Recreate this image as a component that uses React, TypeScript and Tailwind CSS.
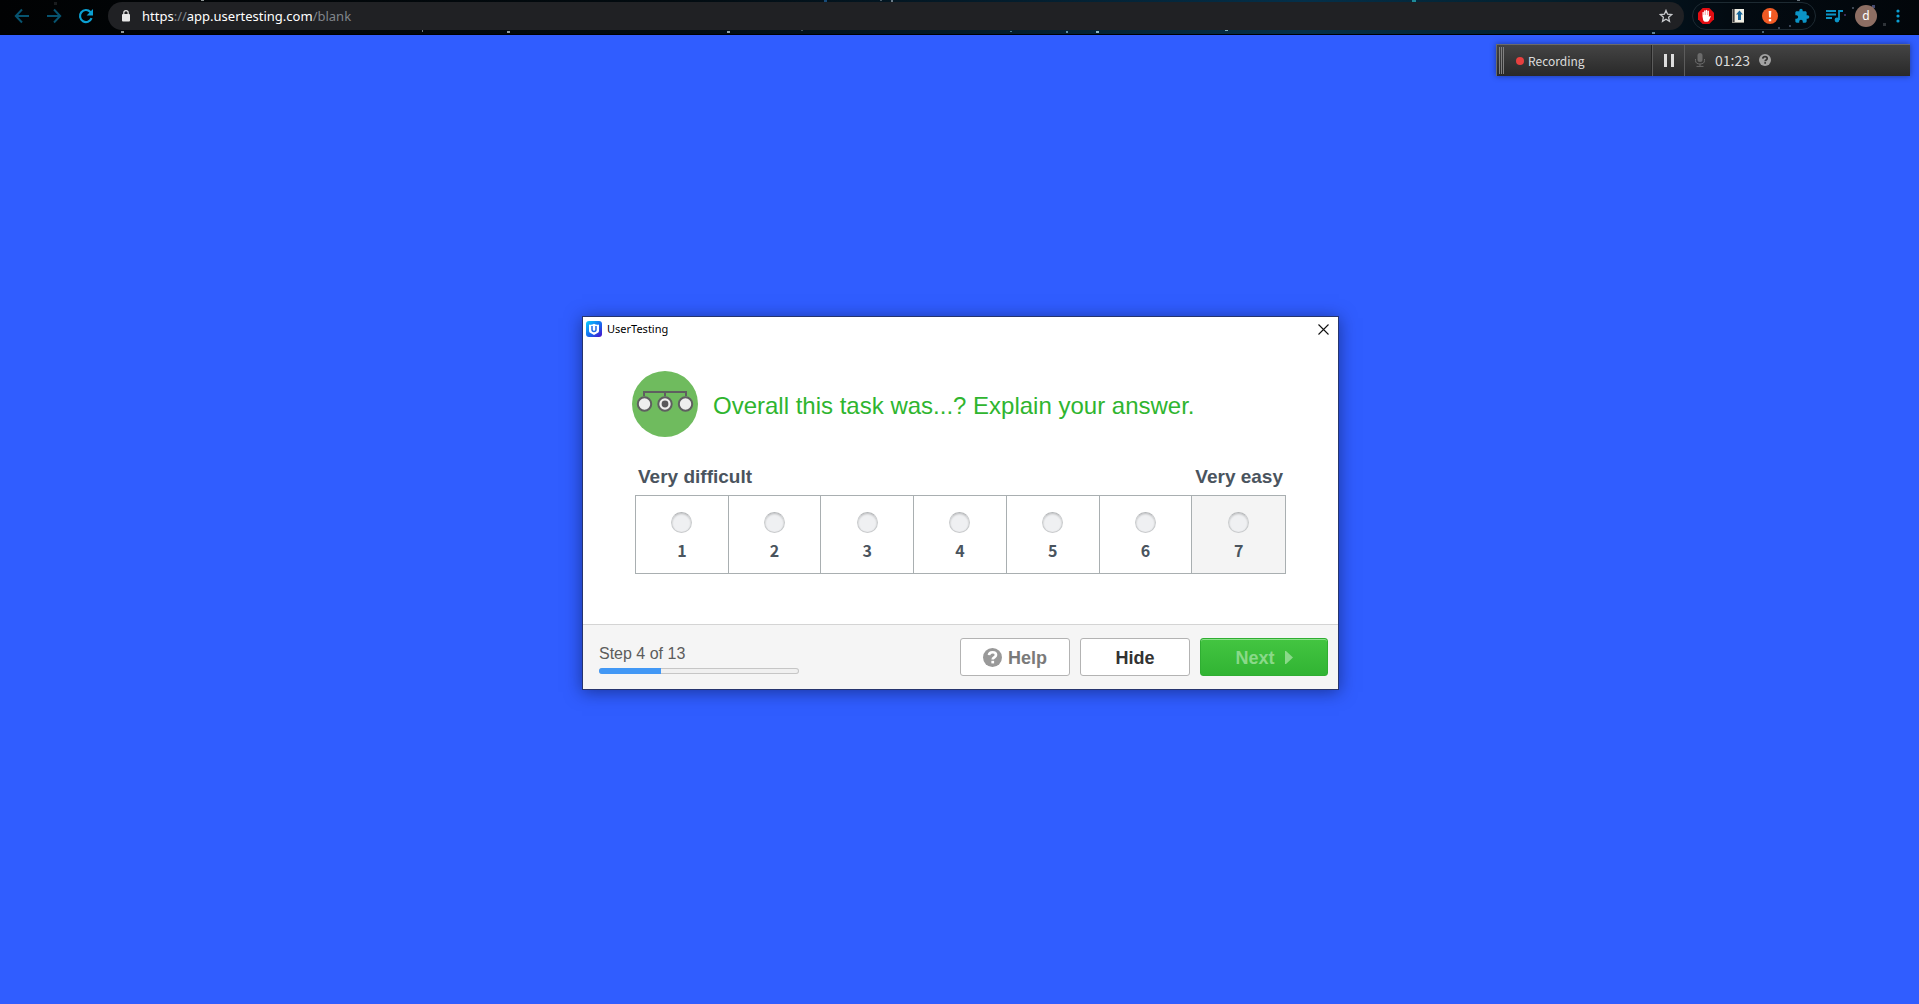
import { useState } from "react";

const STARS: [number, number, number, number, string][] = [
  [121, 31, 3, 2, "#8f9696"],
  [201, 0, 3, 1, "#8f9696"],
  [54, 2, 3, 3, "#1a1c1e"],
  [422, 30, 1, 2, "#6c7780"],
  [507, 31, 3, 2, "#8f9a9c"],
  [727, 31, 3, 2, "#8fa0a4"],
  [824, 0, 3, 2, "#174a78"],
  [880, 0, 2, 1, "#4a5c68"],
  [891, 0, 2, 2, "#6a7c88"],
  [801, 30, 2, 1, "#40505a"],
  [1010, 31, 2, 1, "#467a94"],
  [1066, 31, 2, 2, "#5d8fa6"],
  [1096, 31, 3, 2, "#8db6c4"],
  [1225, 30, 3, 1, "#7fb0b8"],
  [1412, 0, 4, 2, "#1f8a98"],
  [1652, 32, 3, 2, "#5d7f90"],
  [1797, 0, 3, 1, "#6c7880"],
  [1778, 27, 2, 2, "#3b4658"],
  [1789, 25, 2, 2, "#3b4658"],
  [1762, 31, 2, 2, "#4a6274"],
  [1852, 7, 2, 2, "#3b4450"],
  [1872, 5, 3, 3, "#454a70"],
  [1883, 23, 3, 3, "#2e3338"],
  [1844, 14, 2, 2, "#3a2d58"],
];

function BrowserBar() {
  return (
    <header className="relative flex h-[35px] items-start border-b border-black bg-[#02090e] pt-[2px] pr-[13px] pl-2">
      <svg className="pointer-events-none absolute inset-0 h-full w-full" viewBox="0 0 1919 34" preserveAspectRatio="none" aria-hidden="true">
        <defs>
          <linearGradient id="sky" x1="0" x2="1">
            <stop offset="0" stopColor="#010203" />
            <stop offset="0.35" stopColor="#020b10" />
            <stop offset="0.5" stopColor="#031a28" />
            <stop offset="0.68" stopColor="#04304a" />
            <stop offset="0.8" stopColor="#03202e" />
            <stop offset="0.9" stopColor="#030b12" />
            <stop offset="1" stopColor="#02060a" />
          </linearGradient>
        </defs>
        <rect width="1919" height="34" fill="url(#sky)" />
        {STARS.map(([x, y, w, h, c]) => (
          <rect key={`${x}-${y}`} x={x} y={y} width={w} height={h} fill={c} />
        ))}
      </svg>
      <nav className="relative flex h-7 w-[100px] shrink-0 items-center gap-1" aria-label="Navigation">
        <button type="button" aria-label="Back" className="flex h-7 w-7 items-center justify-center text-[#07536f]">
          <svg width="16" height="16" viewBox="0 0 16 16" fill="none" stroke="currentColor" strokeWidth="2">
            <path d="M15 8H2.5M8 1.5 1.8 8 8 14.5" />
          </svg>
        </button>
        <button type="button" aria-label="Forward" className="flex h-7 w-7 items-center justify-center text-[#07536f]">
          <svg width="16" height="16" viewBox="0 0 16 16" fill="none" stroke="currentColor" strokeWidth="2">
            <path d="M1 8h12.5M8 1.5 14.2 8 8 14.5" />
          </svg>
        </button>
        <button type="button" aria-label="Reload" className="flex h-7 w-7 items-center justify-center text-[#0ba0d2]">
          <svg width="16" height="16" viewBox="0 0 16 16" fill="none">
            <path d="M13.6 10.2A6 6 0 1 1 12.4 3.9L13.4 5" stroke="currentColor" strokeWidth="2.2" />
            <path d="M15 1v6.6H8.6z" fill="currentColor" />
          </svg>
        </button>
      </nav>
      <div className="relative flex h-7 min-w-0 flex-1 items-center rounded-full bg-[#202124] pr-2 pl-[14px]">
        <svg width="8" height="12" viewBox="0 0 8 12" className="shrink-0" aria-hidden="true">
          <path d="M1.8 5V2.8a2.2 2.2 0 0 1 4.4 0V5" fill="none" stroke="#e3e3e3" strokeWidth="1.2" />
          <rect y="4" width="8" height="7.5" rx="1" fill="#e8e8e8" />
        </svg>
        <a href="#blank" className="ml-3 flex-1 font-['Noto_Sans',sans-serif] text-[13px] leading-7 text-white">
          https<span className="text-[#80868b]">://</span>app.usertesting.com<span className="text-[#80868b]">/blank</span>
        </a>
        <button type="button" aria-label="Bookmark this page" className="flex h-5 w-5 items-center justify-center">
          <svg width="14" height="14" viewBox="0 0 14 14" fill="none" stroke="#c8cacd" strokeWidth="1.3">
            <path d="m7 1.4 1.6 3.8 4.1.4-3.1 2.7.9 4L7 10.2l-3.5 2.1.9-4-3.1-2.7 4.1-.4z" />
          </svg>
        </button>
      </div>
      <div className="relative ml-2 flex h-7 items-center gap-4 rounded-full border border-[#1d2a32] px-[5px]">
        <button type="button" aria-label="Ad blocker">
          <svg width="16" height="16" viewBox="0 0 16 16">
            <path d="M4.7 0h6.6L16 4.7v6.6L11.3 16H4.7L0 11.3V4.7z" fill="#e20d12" />
            <path d="M4.5 8.5V4.2q.7-.8 1.3 0V7h.3V2.7q.7-.8 1.4 0V7h.3V2.2q.7-.8 1.4 0V7h.3V3q.7-.8 1.4 0v6l1-.9q.8-.3.9.4L11 12.5q-.6 1.2-2 1.2H7.500q-1.600 0-2.300-1.500z" fill="#fff" />
          </svg>
        </button>
        <button type="button" aria-label="Dictionary">
          <svg width="16" height="16" viewBox="0 0 16 16">
            <path d="M2 1h12v14H2z" fill="#f0eee4" />
            <path d="M2 1h3v14H2z" fill="#85827e" />
            <path d="M3 1h1v14H3z" fill="#3c3c40" />
            <path d="M2 14h12v1H2z" fill="#97958d" />
            <path d="m9.500 2.500 3.500 4h-2v5.500H8V6.500H6z" fill="#17679c" />
          </svg>
        </button>
        <button type="button" aria-label="Alert extension">
          <svg width="16" height="16" viewBox="0 0 16 16">
            <circle cx="8" cy="8" r="8" fill="#f15a24" />
            <path d="M6.700 3h2.600L9 9.500H7zM6.800 11h2.400v2.200H6.800z" fill="#fff" />
          </svg>
        </button>
        <button type="button" aria-label="Extensions">
          <svg width="16" height="16" viewBox="0 0 24 24" fill="#0b94c6">
            <path d="M20.5 11H19V7c0-1.1-.9-2-2-2h-4V3.5a2.5 2.5 0 0 0-5 0V5H4c-1.1 0-2 .9-2 2v3.800h1.500a2.700 2.700 0 0 1 0 5.400H2V20c0 1.100.9 2 2 2h3.800v-1.500a2.700 2.700 0 0 1 5.400 0V22H17c1.100 0 2-.9 2-2v-4h1.500a2.500 2.500 0 0 0 0-5z" />
          </svg>
        </button>
      </div>
      <div className="relative flex h-7 items-center pl-[10px]">
        <button type="button" aria-label="Media controls">
          <svg width="17" height="14" viewBox="0 0 17 14" fill="none" stroke="#0b94c6" strokeWidth="1.8">
            <path d="M0 2h10M0 5.500h10M0 9h6M13 11V2h4" />
            <circle cx="11" cy="11" r="2.400" fill="#0b94c6" stroke="none" />
          </svg>
        </button>
        <button type="button" aria-label="Profile" className="ml-3 flex h-[22px] w-[22px] items-center justify-center rounded-full bg-[#8d6e63] font-['Noto_Sans',sans-serif] text-xs leading-none text-white">
          d
        </button>
        <button type="button" aria-label="Menu" className="ml-[13px] flex h-7 w-4 items-center justify-center">
          <svg width="4" height="14" viewBox="0 0 4 14" fill="#0b9fd3">
            <circle cx="2" cy="2" r="1.600" />
            <circle cx="2" cy="7" r="1.600" />
            <circle cx="2" cy="12" r="1.600" />
          </svg>
        </button>
      </div>
    </header>
  );
}

function QuestionMark({ size, fill, mark }: { size: number; fill: string; mark: string }) {
  return (
    <svg width={size} height={size} viewBox="0 0 20 20" aria-hidden="true">
      <circle cx="10" cy="10" r="10" fill={fill} />
      <path d="M6.300 7.600C6.500 5.300 8 4.500 10 4.500c2.200 0 3.700 1 3.700 2.900 0 2.500-3.500 2.500-3.500 4.800" fill="none" stroke={mark} strokeWidth="2.800" />
      <rect x="8.800" y="13.500" width="2.900" height="2.700" fill={mark} />
    </svg>
  );
}

function RecordingBar() {
  return (
    <section
      aria-label="Recording controls"
      className="flex h-8 w-[414px] items-stretch border-t border-l border-[#6a6a6a] bg-linear-to-b from-[#444] to-[#292929] font-['Noto_Sans_CJK_SC',sans-serif] text-[#dcdcdc] shadow-[0_0_6px_rgba(0,0,0,0.4)]"
    >
      <div className="flex w-[155px] items-center border-r border-[#232323] pl-[2px]">
        <span className="flex h-[27px] w-[5px] justify-between" aria-hidden="true">
          <i className="w-px bg-[#808080]" />
          <i className="w-px bg-[#808080]" />
          <i className="w-px bg-[#808080]" />
        </span>
        <span className="ml-3 h-2 w-2 rounded-full bg-[#e8403f]" />
        <span className="ml-1 text-xs leading-4">Recording</span>
      </div>
      <button type="button" aria-label="Pause" className="flex w-[33px] items-center justify-center gap-1 border-x border-[#5c5c5c]">
        <i className="h-[13px] w-[3px] bg-[#dedede]" />
        <i className="h-[13px] w-[3px] bg-[#dedede]" />
      </button>
      <div className="flex items-center pb-[2px] pl-2">
        <svg width="14" height="14" viewBox="0 0 14 14" fill="none" stroke="#6b6b6b" aria-hidden="true">
          <rect x="4.500" y="0" width="5" height="9" rx="2.500" fill="#6b6b6b" stroke="none" />
          <path d="M2.500 6v1.500a4.500 3.500 0 0 0 9 0V6M7 11v2M3.500 13.400h7" />
        </svg>
        <span className="ml-2 text-sm leading-5">01:23</span>
        <button type="button" aria-label="Recording help" className="ml-[9px]">
          <QuestionMark size={12} fill="#a3a3a3" mark="#333333" />
        </button>
      </div>
    </section>
  );
}

function TaskDialog() {
  const [rating, setRating] = useState<number | null>(null);
  const step = 4;
  const total = 13;
  return (
    <main className="w-[757px] border border-[#26346f] bg-white shadow-[0_2px_16px_rgba(10,20,70,0.55)]" role="dialog" aria-label="UserTesting">
      <div className="flex h-6 items-center pr-[9px] pl-[3px]">
        <svg width="16" height="16" viewBox="0 0 16 16" aria-hidden="true">
          <defs>
            <linearGradient id="brand" x1="0" y1="0" x2="1" y2="1">
              <stop offset="0" stopColor="#08cfff" />
              <stop offset="0.55" stopColor="#1769ee" />
              <stop offset="1" stopColor="#4a0bc8" />
            </linearGradient>
          </defs>
          <rect width="16" height="16" rx="3" fill="url(#brand)" />
          <path d="M3 3.500q2.500.8 5-.8 2.500 1.600 5 .8v6.500q0 1.500-1.500 2L8 14l-3.500-2Q3 11.500 3 10z" fill="#fff" />
          <path d="M6 5v3.500a2 2 0 0 0 4 0V5" fill="none" stroke="#1f6be8" strokeWidth="1.500" />
        </svg>
        <span className="ml-[5px] font-['Noto_Sans',sans-serif] text-[11px] leading-4 text-black">UserTesting</span>
        <button type="button" aria-label="Close" className="ml-auto">
          <svg width="11" height="11" viewBox="0 0 11 11" fill="none" stroke="#111" strokeWidth="1.100">
            <path d="m.5.500 10 10M10.500.500l-10 10" />
          </svg>
        </button>
      </div>

      <div className="pt-[30px] pr-[52px] pb-[50px] pl-[49px]">
        <div className="flex items-center">
          <svg width="66" height="66" viewBox="0 0 66 66" className="shrink-0" aria-hidden="true">
            <circle cx="33" cy="33" r="33" fill="#6fbb5e" />
            <path d="M12 25v-4h42v4M33 21v4" fill="none" stroke="#5f5f60" strokeWidth="2" />
            <g fill="#eee" stroke="#5f5f60" strokeWidth="2">
              <circle cx="12.500" cy="33" r="6.700" />
              <circle cx="33" cy="33" r="6.700" />
              <circle cx="53.500" cy="33" r="6.700" />
            </g>
            <circle cx="33" cy="33" r="3.400" fill="#58585a" />
          </svg>
          <h1 className="ml-[15px] pt-1 font-['Liberation_Sans',sans-serif] text-2xl leading-8 text-[#2fb52f]">
            Overall this task was...? Explain your answer.
          </h1>
        </div>
        <div role="radiogroup" aria-label="Task difficulty" className="mt-[26px] ml-[3px] font-['Liberation_Sans',sans-serif] text-[#4a545e]">
          <div className="flex h-8 items-center justify-between px-[3px] pb-[5px] text-[19px] leading-7 font-bold">
            <span>Very difficult</span>
            <span>Very easy</span>
          </div>
          <div className="grid grid-cols-7 divide-x divide-[#a9afb1] border border-[#a9afb1]">
            {[1, 2, 3, 4, 5, 6, 7].map((n) => (
              <label key={n} className={n === 7 ? "flex h-[77px] flex-col items-center bg-[#f4f4f4] pt-4" : "flex h-[77px] flex-col items-center pt-4"}>
                <input
                  type="radio"
                  name="rating"
                  value={n}
                  checked={rating === n}
                  onChange={() => setRating(n)}
                  className="h-[21px] w-[21px] appearance-none rounded-full border border-[#c9cbcd] border-t-[#b4b6b8] bg-[#eff0f2] shadow-[inset_0_1px_2px_rgba(0,0,0,0.2)] checked:bg-[#459bf5]"
                />
                <span className="mt-[5px] font-['Noto_Sans_CJK_SC',sans-serif] text-base leading-6 font-bold">{n}</span>
              </label>
            ))}
          </div>
        </div>
      </div>

      <footer className="flex items-start border-t border-[#d4d4d4] bg-[#f5f5f5] pt-[13px] pr-[10px] pb-[13px] pl-4 font-['Liberation_Sans',sans-serif]">
        <div className="w-[200px] pt-[6px]">
          <div className="text-base leading-5 text-[#5c5c5c]">Step 4 of 13</div>
          <div role="progressbar" aria-label="Progress" aria-valuenow={step} aria-valuemax={total} className="mt-1 h-[6px] overflow-hidden rounded-[3px] bg-[#f0f0f0] shadow-[inset_0_0_0_1px_#c6c6c6]">
            <div className="h-full bg-[#4298f5]" style={{ width: `${(step / total) * 100}%` }} />
          </div>
        </div>
        <div className="ml-auto flex gap-[10px] text-lg leading-6 font-bold">
          <button type="button" className="flex h-[38px] w-[110px] items-center justify-center gap-[6px] rounded-[3px] border border-[#b3b3b3] bg-white text-[#7a7a7a]">
            <QuestionMark size={19} fill="#999999" mark="#ffffff" />
            <span className="pt-[2px]">Help</span>
          </button>
          <button type="button" className="h-[38px] w-[110px] rounded-[3px] border border-[#b3b3b3] bg-white pt-[2px] text-[#333]">
            Hide
          </button>
          <button type="button" className="flex h-[38px] w-32 items-center justify-center gap-[10px] rounded-[3px] border border-[#2fae32] bg-linear-to-b from-[#43c541] to-[#31b433] text-[#8ad989] shadow-[inset_0_1px_0_#8be289]">
            <span className="pt-[2px]">Next</span>
            <svg width="8" height="13" viewBox="0 0 8 13" fill="currentColor" aria-hidden="true">
              <path d="M0 0h1l7 6.500L1 13H0z" />
            </svg>
          </button>
        </div>
      </footer>
    </main>
  );
}

export default function App() {
  return (
    <div className="flex min-h-screen flex-col bg-[#305dff]">
      <BrowserBar />
      <div className="flex justify-end px-[9px] pt-[9px]">
        <RecordingBar />
      </div>
      <div className="flex justify-center pt-60 pb-8 pl-[2px]">
        <TaskDialog />
      </div>
    </div>
  );
}
